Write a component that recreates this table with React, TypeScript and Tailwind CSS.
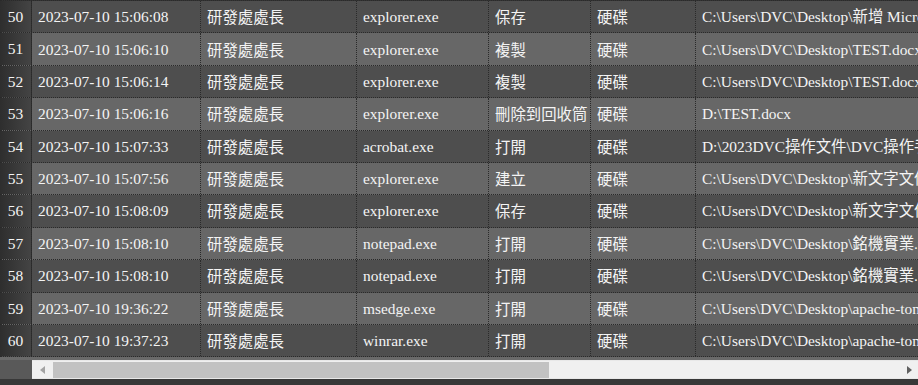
import React from 'react';

type Row = {
  no: number;
  time: string;
  user: string;
  proc: string;
  action: string;
  device: string;
  path: string;
};

const rows: Row[] = [
  { no: 50, time: '2023-07-10 15:06:08', user: '研發處處長', proc: 'explorer.exe', action: '保存', device: '硬碟', path: 'C:\\Users\\DVC\\Desktop\\新增 Microsoft Word 文件.docx' },
  { no: 51, time: '2023-07-10 15:06:10', user: '研發處處長', proc: 'explorer.exe', action: '複製', device: '硬碟', path: 'C:\\Users\\DVC\\Desktop\\TEST.docx' },
  { no: 52, time: '2023-07-10 15:06:14', user: '研發處處長', proc: 'explorer.exe', action: '複製', device: '硬碟', path: 'C:\\Users\\DVC\\Desktop\\TEST.docx' },
  { no: 53, time: '2023-07-10 15:06:16', user: '研發處處長', proc: 'explorer.exe', action: '刪除到回收筒', device: '硬碟', path: 'D:\\TEST.docx' },
  { no: 54, time: '2023-07-10 15:07:33', user: '研發處處長', proc: 'acrobat.exe', action: '打開', device: '硬碟', path: 'D:\\2023DVC操作文件\\DVC操作手冊.pdf' },
  { no: 55, time: '2023-07-10 15:07:56', user: '研發處處長', proc: 'explorer.exe', action: '建立', device: '硬碟', path: 'C:\\Users\\DVC\\Desktop\\新文字文件.txt' },
  { no: 56, time: '2023-07-10 15:08:09', user: '研發處處長', proc: 'explorer.exe', action: '保存', device: '硬碟', path: 'C:\\Users\\DVC\\Desktop\\新文字文件.txt' },
  { no: 57, time: '2023-07-10 15:08:10', user: '研發處處長', proc: 'notepad.exe', action: '打開', device: '硬碟', path: 'C:\\Users\\DVC\\Desktop\\銘機實業.txt' },
  { no: 58, time: '2023-07-10 15:08:10', user: '研發處處長', proc: 'notepad.exe', action: '打開', device: '硬碟', path: 'C:\\Users\\DVC\\Desktop\\銘機實業.txt' },
  { no: 59, time: '2023-07-10 19:36:22', user: '研發處處長', proc: 'msedge.exe', action: '打開', device: '硬碟', path: 'C:\\Users\\DVC\\Desktop\\apache-tomcat-9.0.zip' },
  { no: 60, time: '2023-07-10 19:37:23', user: '研發處處長', proc: 'winrar.exe', action: '打開', device: '硬碟', path: 'C:\\Users\\DVC\\Desktop\\apache-tomcat-9.0.zip' },
];

const cell = 'flex items-center shrink-0 px-[6px] border-r border-dotted border-[#2a2a2a] overflow-hidden whitespace-nowrap';
const cjk = 'text-[15.4px]';
const cjkFont = { fontFamily: '"Noto Sans CJK TC", sans-serif' };

export default function App() {
  return (
    <div
      className="w-[918px] h-[385px] overflow-hidden bg-[#333333] text-[#f4f4f4] flex flex-col text-[15.4px]"
      style={{ fontFamily: '"Liberation Serif", "Noto Sans CJK TC", serif' }}
    >
      <div className="flex flex-col border-t border-dotted border-[#2a2a2a]">
        {rows.map((r, i) => (
          <div
            key={r.no}
            className={`flex h-[32.4px] border-b border-dotted border-[#2a2a2a] ${
              i % 2 === 0 ? 'bg-[#4e4e4e]' : 'bg-[#676767]'
            }`}
          >
            <div className="w-[32px] shrink-0 flex items-center justify-center border-r border-dotted border-[#2a2a2a] bg-gradient-to-r from-[#2e2e2e] to-[#444444] text-[15.5px]">
              {r.no}
            </div>
            <div className={`${cell} w-[169px]`}>{r.time}</div>
            <div className={`${cell} w-[156px] ${cjk}`} style={cjkFont}>{r.user}</div>
            <div className={`${cell} w-[132px]`}>{r.proc}</div>
            <div className={`${cell} w-[102px] ${cjk}`} style={cjkFont}>{r.action}</div>
            <div className={`${cell} w-[105px] ${cjk}`} style={cjkFont}>{r.device}</div>
            <div className={`${cell} flex-1 border-r-0`}>{r.path}</div>
          </div>
        ))}
      </div>
      <div className="h-[3px] bg-[#6a6a6a]" />
      <div className="flex h-[19px]">
        <div className="w-[32px] shrink-0 bg-[#595959]" />
        <div className="flex-1 flex items-center bg-[#f0f0f0] border-y border-[#e8e8e8]">
          <div className="w-[21px] h-full flex items-center justify-center">
            <svg width="5" height="8" viewBox="0 0 5 8">
              <path d="M5 0 L0 4 L5 8 Z" fill="#a3a3a3" />
            </svg>
          </div>
          <div className="w-[496px] h-[16px] bg-[#c2c2c2]" />
          <div className="flex-1" />
          <div className="w-[17px] h-full flex items-center justify-center">
            <svg width="5" height="8" viewBox="0 0 5 8">
              <path d="M0 0 L5 4 L0 8 Z" fill="#606060" />
            </svg>
          </div>
        </div>
      </div>
      <div className="flex-1 bg-[#383838]" />
    </div>
  );
}
